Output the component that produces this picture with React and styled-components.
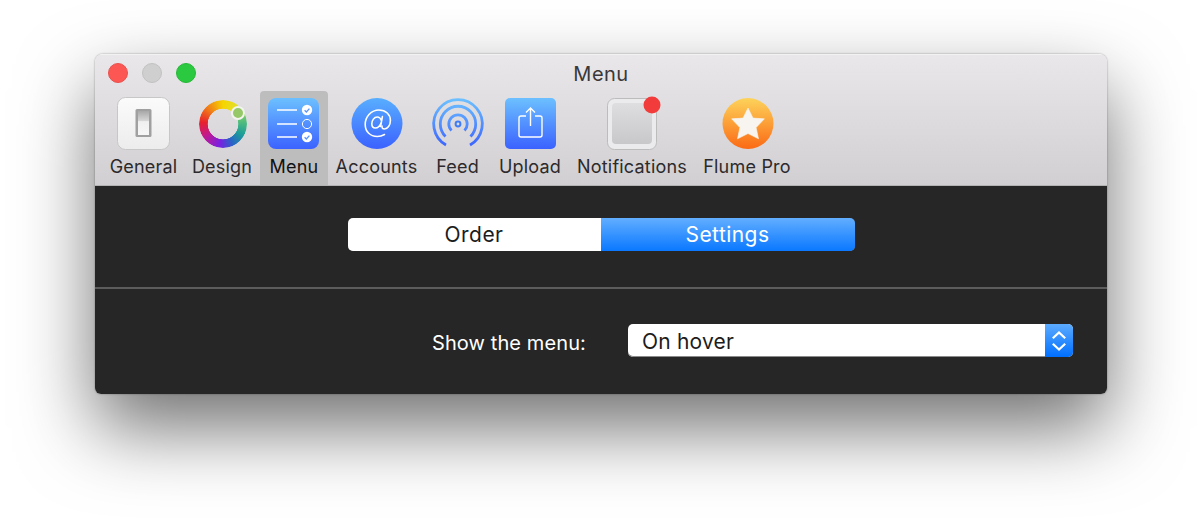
import React from "react";
import styled, { createGlobalStyle } from "styled-components";

const GlobalStyle = createGlobalStyle`
  html, body {
    margin: 0;
    padding: 0;
    background: #ffffff;
    overflow: hidden;
  }
`;

const Page = styled.div`
  width: 1200px;
  height: 526px;
  padding: 54px 93px 0 95px;
  box-sizing: border-box;
  overflow: hidden;
  font-family: Inter, "Liberation Sans", sans-serif;
`;

const WindowShadow = styled.div`
  width: 1012px;
  height: 340px;
  border-radius: 8px 8px 6px 6px;
  box-shadow: 0 34px 76px rgba(0, 0, 0, 0.56), 0 0 2px rgba(0, 0, 0, 0.4);
`;

const Window = styled.div`
  width: 1012px;
  height: 340px;
  border-radius: 8px 8px 6px 6px;
  overflow: hidden;
  display: flex;
  flex-direction: column;
`;

const TitleBar = styled.div`
  height: 132px;
  box-sizing: border-box;
  padding: 0 0 0 8px;
  background: linear-gradient(#e9e7e9, #d1cfd1);
  border-top: 1px solid #f3f2f3;
  border-bottom: 1px solid #b4b3b4;
  display: flex;
  flex-direction: column;
`;

const TitleRow = styled.div`
  height: 36px;
  display: flex;
  align-items: center;
  position: relative;
`;

const Lights = styled.div`
  display: flex;
  gap: 14px;
  padding: 0 0 0 5px;
`;

const Light = styled.span`
  width: 20px;
  height: 20px;
  border-radius: 50%;
  box-sizing: border-box;
  background: ${(p) => p.$color};
  border: 1px solid ${(p) => p.$edge};
`;

const Title = styled.div`
  position: absolute;
  left: 0;
  right: 8px;
  top: 7px;
  text-align: center;
  font-size: 20px;
  line-height: 24px;
  letter-spacing: 0.5px;
  color: #3a383a;
`;

const Tabs = styled.div`
  display: flex;
  height: 94px;
`;

const Tab = styled.div`
  width: ${(p) => p.$w}px;
  flex: none;
  display: flex;
  flex-direction: column;
  align-items: center;
  box-sizing: border-box;
  padding-top: 6px;
  background: ${(p) => (p.$active ? "#bebdbe" : "transparent")};
  border-radius: ${(p) => (p.$active ? "4px 4px 0 0" : "0")};
`;

const IconBox = styled.div`
  width: 54px;
  height: 54px;
  flex: none;

  svg {
    display: block;
    overflow: visible;
  }
`;

const TabLabel = styled.div`
  margin-top: 4px;
  font-size: 18px;
  line-height: 24px;
  letter-spacing: 0.2px;
  white-space: nowrap;
  color: ${(p) => (p.$active ? "#111111" : "#2c2a2c")};
`;

const Content = styled.div`
  flex: 1;
  background: #262626;
  display: flex;
  flex-direction: column;
`;

const SegmentRow = styled.div`
  height: 103px;
  flex: none;
  box-sizing: border-box;
  padding-top: 32px;
  display: flex;
  justify-content: center;
  border-bottom: 2px solid #5c5c5c;
`;

const Segmented = styled.div`
  display: flex;
  width: 507px;
  height: 33px;
  border-radius: 5px;
  overflow: hidden;
  box-shadow: inset 0 -1px 0 #8f8f8f;
`;

const Segment = styled.div`
  width: ${(p) => p.$w}px;
  display: flex;
  align-items: center;
  justify-content: center;
  font-size: 21px;
  letter-spacing: 0.45px;
  color: ${(p) => (p.$on ? "#ffffff" : "#1c1c1c")};
  background: ${(p) => (p.$on ? "linear-gradient(#62aeff, #0a78ff)" : "#ffffff")};
`;

const FormRow = styled.div`
  flex: 1;
  display: flex;
  align-items: flex-start;
  padding: 35px 0 0 337px;
`;

const FieldLabel = styled.div`
  width: 196px;
  flex: none;
  padding-top: 3px;
  font-size: 20px;
  line-height: 33px;
  letter-spacing: 0.1px;
  color: #ffffff;
  white-space: nowrap;
`;

const Select = styled.div`
  width: 445px;
  height: 33px;
  display: flex;
  border-radius: 5px;
  overflow: hidden;
  background: #ffffff;
  box-shadow: inset 0 -1px 0 #8a8a8a;
`;

const SelectValue = styled.div`
  flex: 1;
  padding: 2px 0 0 14px;
  font-size: 21px;
  line-height: 31px;
  letter-spacing: 0.2px;
  color: #1c1c1c;
`;

const Stepper = styled.div`
  width: 28px;
  display: flex;
  align-items: center;
  justify-content: center;
  background: linear-gradient(#5cabff, #006fff);
`;

const WheelWrap = styled.div`
  position: relative;
  width: 54px;
  height: 54px;
`;

const ColorWheel = styled.div`
  width: 48px;
  height: 48px;
  margin: 3px 2px 3px 4px;
  border-radius: 50%;
  background: conic-gradient(#f6d400 0deg, #e2e02c 40deg, #58c07a 80deg, #1b9c98 120deg, #2a62c8 155deg, #7a1fe0 190deg, #c01a90 235deg, #e8222c 275deg, #f07a18 315deg, #f6d400 360deg);
  -webkit-mask: radial-gradient(circle, transparent 15px, #000 15.6px);
  mask: radial-gradient(circle, transparent 15px, #000 15.6px);
`;

const WheelKnob = styled.span`
  position: absolute;
  top: 6px;
  right: 4px;
  width: 14px;
  height: 14px;
  box-sizing: border-box;
  border-radius: 50%;
  background: #97c868;
  border: 2px solid #f2f5ee;
`;

const GeneralIcon = () => (
  <svg width="54" height="54" viewBox="0 0 54 54">
    <defs>
      <linearGradient id="gen" x1="0" y1="0" x2="0" y2="1">
        <stop offset="0" stopColor="#fbfbfb" />
        <stop offset="1" stopColor="#ececec" />
      </linearGradient>
      <linearGradient id="sw" x1="0" y1="0" x2="0" y2="1">
        <stop offset="0" stopColor="#a8a8a8" />
        <stop offset="0.42" stopColor="#d8d8d8" />
        <stop offset="0.44" stopColor="#f0f0f0" />
        <stop offset="1" stopColor="#f7f7f7" />
      </linearGradient>
    </defs>
    <rect x="0.5" y="0.5" width="52" height="52" rx="8" fill="url(#gen)" stroke="#c8c7c8" />
    <rect x="18.5" y="12" width="16" height="28" rx="1.5" fill="#a0a0a0" />
    <rect x="21" y="14" width="11" height="24" fill="url(#sw)" />
  </svg>
);

const MenuIcon = () => (
  <svg width="54" height="54" viewBox="0 0 54 54">
    <defs>
      <linearGradient id="blue" x1="0" y1="0" x2="0" y2="1">
        <stop offset="0" stopColor="#6cc0ff" />
        <stop offset="1" stopColor="#3b62ff" />
      </linearGradient>
    </defs>
    <rect x="1" y="1" width="51" height="51" rx="8" fill="url(#blue)" />
    <g stroke="#ffffff" strokeWidth="1.5" fill="none">
      <path d="M10 13h20M10 27h20M10 40h20" />
      <circle cx="40" cy="27" r="4.6" strokeWidth="1" />
    </g>
    <circle cx="40" cy="13" r="5.2" fill="#ffffff" />
    <circle cx="40" cy="40" r="5.2" fill="#ffffff" />
    <path d="M37.6 13.2l1.8 1.8 3-3.4M37.6 40.2l1.8 1.8 3-3.4" stroke="#5a96ff" strokeWidth="1.3" fill="none" />
  </svg>
);

const AccountsIcon = () => (
  <svg width="54" height="54" viewBox="0 0 54 54">
    <defs>
      <linearGradient id="acc" x1="0" y1="0" x2="0" y2="1">
        <stop offset="0" stopColor="#58aeff" />
        <stop offset="1" stopColor="#3b62ff" />
      </linearGradient>
    </defs>
    <circle cx="27" cy="26.5" r="25.5" fill="url(#acc)" />
    <g stroke="#ffffff" strokeWidth="1.6" fill="none" strokeLinecap="round">
      <path d="M34.5 37.5c-2.4 1.4-4.6 2-7.2 2-7.4 0-12.1-5.2-12.1-12 0-8 6.2-14.5 13.6-14.5 7 0 11.6 4.6 11.6 10.4 0 5-2.8 8.6-6 8.6-1.8 0-2.6-1.1-2.4-3" />
      <path d="M32.4 19.6l-1.8 9.8M31.6 24c-.8-2.4-2.4-4-4.4-4-3 0-5.4 3.4-5.4 6.8 0 2.6 1.4 4.2 3.4 4.2 2.6 0 5-2.4 6-5.6" />
    </g>
  </svg>
);

const FeedIcon = () => (
  <svg width="54" height="54" viewBox="0 0 54 54">
    <defs>
      <linearGradient id="feed" gradientUnits="userSpaceOnUse" x1="0" y1="2" x2="0" y2="50">
        <stop offset="0" stopColor="#6cc0ff" />
        <stop offset="1" stopColor="#3b62ff" />
      </linearGradient>
    </defs>
    <g stroke="url(#feed)" fill="none" strokeWidth="2.8">
      <path d="M15 48A24.3 24.3 0 1 1 39 48" />
      <path d="M14.5 39.5A17.7 17.7 0 1 1 39.5 39.5" />
      <path d="M20.5 33.5A9.2 9.2 0 1 1 33.5 33.5" />
    </g>
    <circle cx="27" cy="27" r="2.4" fill="none" stroke="#3f7cf5" strokeWidth="2" />
  </svg>
);

const UploadIcon = () => (
  <svg width="54" height="54" viewBox="0 0 54 54">
    <defs>
      <linearGradient id="up" x1="0" y1="0" x2="0" y2="1">
        <stop offset="0" stopColor="#6cc0ff" />
        <stop offset="1" stopColor="#3b62ff" />
      </linearGradient>
    </defs>
    <rect x="2" y="1" width="51" height="51" rx="5" fill="url(#up)" />
    <g stroke="#ffffff" strokeWidth="1.4" fill="none">
      <path d="M23 19h-5a2 2 0 0 0-2 2v17a2 2 0 0 0 2 2h19a2 2 0 0 0 2-2V21a2 2 0 0 0-2-2h-5" />
      <path d="M27.5 29V11.5M23 15.5l4.5-4.5 4.5 4.5" />
    </g>
  </svg>
);

const NotificationsIcon = () => (
  <svg width="54" height="54" viewBox="0 0 54 54">
    <defs>
      <linearGradient id="note" x1="0" y1="0" x2="0" y2="1">
        <stop offset="0" stopColor="#dedee0" />
        <stop offset="1" stopColor="#c8c8ca" />
      </linearGradient>
    </defs>
    <rect x="2.5" y="1.5" width="49" height="51" rx="7" fill="#ebebed" stroke="#bdbcbd" />
    <rect x="7" y="6" width="40" height="41" rx="4" fill="url(#note)" />
    <circle cx="47" cy="8" r="8.5" fill="#f23c3c" />
  </svg>
);

const FlumeIcon = () => (
  <svg width="54" height="54" viewBox="0 0 54 54">
    <defs>
      <linearGradient id="pro" x1="0" y1="0" x2="0" y2="1">
        <stop offset="0" stopColor="#fdd35a" />
        <stop offset="1" stopColor="#fb6a14" />
      </linearGradient>
    </defs>
    <circle cx="28" cy="26.5" r="25.5" fill="url(#pro)" />
    <path
      d="M28 11l5 10.1 11.4.7-8.3 8.8 2.4 11.2L28 36.5l-10.5 5.3 2.4-11.2-8.3-8.8 11.4-.7z"
      fill="#f8f5f0"
      stroke="#f8f5f0"
      strokeWidth="0.6"
      strokeLinejoin="round"
    />
  </svg>
);

const tabs = [
  { label: "General", w: 81, icon: <GeneralIcon /> },
  {
    label: "Design",
    w: 76,
    icon: (
      <WheelWrap>
        <ColorWheel />
        <WheelKnob />
      </WheelWrap>
    ),
  },
  { label: "Menu", w: 68, icon: <MenuIcon />, active: true },
  { label: "Accounts", w: 97, icon: <AccountsIcon /> },
  { label: "Feed", w: 65, icon: <FeedIcon /> },
  { label: "Upload", w: 80, icon: <UploadIcon /> },
  { label: "Notifications", w: 124, icon: <NotificationsIcon /> },
  { label: "Flume Pro", w: 106, icon: <FlumeIcon /> },
];

const App = () => {
  return (
    <Page>
      <GlobalStyle />
      <WindowShadow>
        <Window>
          <TitleBar>
            <TitleRow>
              <Lights>
                <Light $color="#fc5753" $edge="#e9514d" />
                <Light $color="#cfcfcf" $edge="#c2c2c2" />
                <Light $color="#2ac93f" $edge="#27b739" />
              </Lights>
              <Title>Menu</Title>
            </TitleRow>
            <Tabs>
              {tabs.map((t) => (
                <Tab key={t.label} $w={t.w} $active={t.active}>
                  <IconBox>{t.icon}</IconBox>
                  <TabLabel $active={t.active}>{t.label}</TabLabel>
                </Tab>
              ))}
            </Tabs>
          </TitleBar>
          <Content>
            <SegmentRow>
              <Segmented>
                <Segment $w={253}>Order</Segment>
                <Segment $w={254} $on>Settings</Segment>
              </Segmented>
            </SegmentRow>
            <FormRow>
              <FieldLabel>Show the menu:</FieldLabel>
              <Select>
                <SelectValue>On hover</SelectValue>
                <Stepper>
                  <svg width="16" height="24" viewBox="0 0 16 24" fill="none" stroke="#ffffff" strokeWidth="2.2">
                    <path d="M1.8 9.2L8 3.4l6.2 5.8M1.8 14.8L8 20.6l6.2-5.8" />
                  </svg>
                </Stepper>
              </Select>
            </FormRow>
          </Content>
        </Window>
      </WindowShadow>
    </Page>
  );
};

export default App;
